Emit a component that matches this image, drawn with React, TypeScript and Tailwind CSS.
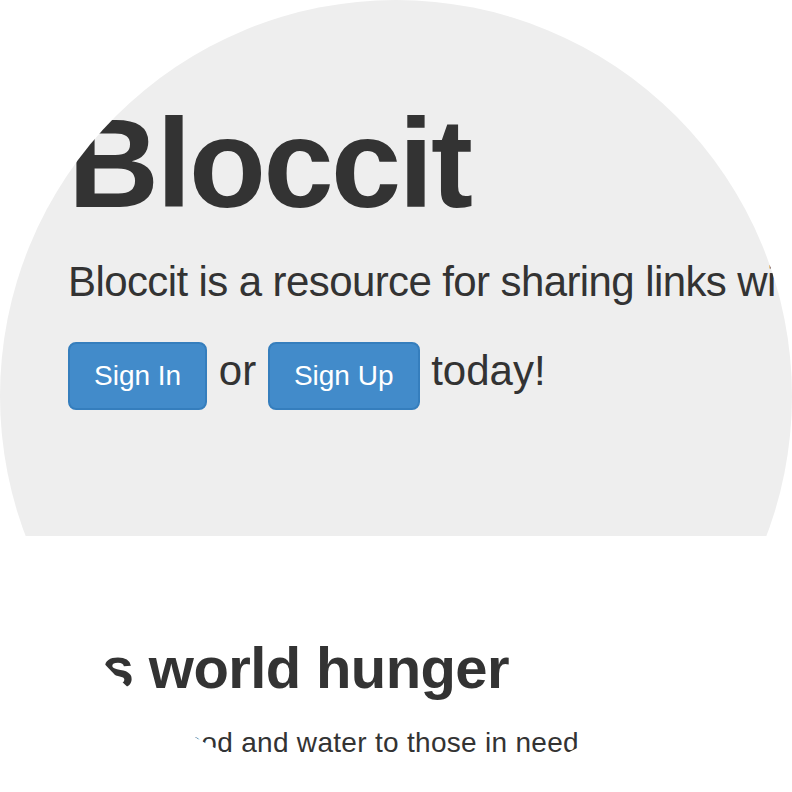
export default function App() {
  return (
    <div className="w-[792px] h-[792px] rounded-full overflow-hidden bg-white text-[#333] font-['Liberation_Sans',Arial,sans-serif]">
      {/* Jumbotron */}
      <div className="h-[536px] bg-[#eeeeee] pl-[68px] pt-[101px]">
        <h1 className="text-[126px] leading-[126px] font-bold tracking-[-2.5px]">Bloccit</h1>
        <p className="mt-[25px] text-[42px] leading-[60px] whitespace-nowrap tracking-[-0.6px]">
          Bloccit is a resource for sharing links with friends.
        </p>
        <p className="mt-[29px] text-[42px] leading-[60px] whitespace-nowrap">
          <button className="inline-block px-[24px] py-[12px] text-[28px] leading-[40px] text-white bg-[#428bca] border-2 border-[#357ebd] rounded-[8px]">
            Sign In
          </button>{" "}
          or{" "}
          <button className="inline-block px-[24px] py-[12px] text-[28px] leading-[40px] text-white bg-[#428bca] border-2 border-[#357ebd] rounded-[8px]">
            Sign Up
          </button>{" "}
          today!
        </p>
      </div>

      {/* Marketing */}
      <div className="flex justify-end w-[509px] mt-[99px]">
        <h2 className="shrink-0 whitespace-nowrap text-[58px] leading-[66px] font-bold tracking-[-0.6px]">
          Bloccit solves world hunger
        </h2>
      </div>
      <div className="flex justify-end w-[579px] mt-[22px]">
        <p className="shrink-0 whitespace-nowrap text-[28px] leading-[40px] tracking-[0.3px]">
          Bloccit provides food and water to those in need
        </p>
      </div>
    </div>
  );
}
